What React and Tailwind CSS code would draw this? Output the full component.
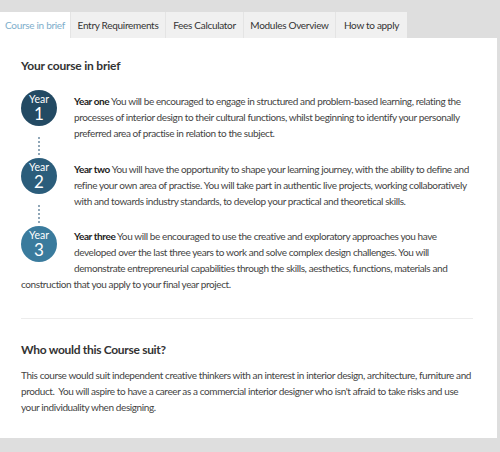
import React from "react";

const TABS = [
  { label: "Course in brief", w: "w-[70px]", active: true },
  { label: "Entry Requirements", w: "w-[95px]" },
  { label: "Fees Calculator", w: "w-[78px]" },
  { label: "Modules Overview", w: "w-[92px]" },
  { label: "How to apply", w: "w-[72px]" },
];

const YEARS = [
  {
    n: "1",
    title: "Year one",
    bg: "bg-[#234a63]",
    lines: [
      "You will be encouraged to engage in structured and problem-based learning, relating the",
      "processes of interior design to their cultural functions, whilst beginning to identify your personally",
      "preferred area of practise in relation to the subject.",
    ],
  },
  {
    n: "2",
    title: "Year two",
    bg: "bg-[#2b5d7b]",
    lines: [
      "You will have the opportunity to shape your learning journey, with the ability to define and",
      "refine your own area of practise. You will take part in authentic live projects, working collaboratively",
      "with and towards industry standards, to develop your practical and theoretical skills.",
    ],
  },
];

function Circle({ n, bg }) {
  return (
    <div className={`w-[36px] h-[36px] rounded-full ${bg} text-white flex flex-col items-center justify-center leading-none tracking-normal`}>
      <span className="text-[10.5px]">Year</span>
      <span className="text-[17px] mt-[1px]">{n}</span>
    </div>
  );
}

function Dots() {
  return (
    <div className="flex flex-col items-center gap-[2px] mt-[11px]">
      {[0, 1, 2, 3, 4].map((i) => (
        <span key={i} className="w-[2px] h-[2px] rounded-full bg-[#6b8aa0]" />
      ))}
    </div>
  );
}

export default function App() {
  return (
    <div
      className="w-[500px] h-[452px] bg-[#dedede] pt-[12px] overflow-hidden text-[#444]"
      style={{ fontFamily: "Lato, 'Open Sans', sans-serif" }}
    >
      {/* tabs */}
      <div className="flex h-[26px]">
        {TABS.map((t) => (
          <div
            key={t.label}
            className={`${t.w} flex items-center justify-center text-[10px] tracking-[-0.3px] whitespace-nowrap ${
              t.active ? "bg-white text-[#7eaecb]" : "bg-[#f0f0f0] text-[#333] border-l border-[#e4e4e4]"
            }`}
          >
            {t.label}
          </div>
        ))}
      </div>

      {/* panel */}
      <div className="w-[497px] h-[400px] bg-white px-[21px] text-[10px] leading-[16px] tracking-[-0.4px]">
        <h2 className="pt-[20px] text-[12px] leading-[16px] font-bold text-[#333] tracking-[-0.2px]">Your course in brief</h2>

        <div className="mt-[16px]">
          {YEARS.map((y) => (
            <div key={y.n} className="flex h-[68px]">
              <div className="w-[36px] flex flex-col items-center">
                <Circle n={y.n} bg={y.bg} />
                <Dots />
              </div>
              <p className="ml-[17px] pt-[3px] whitespace-nowrap">
                <b className="text-[#222]">{y.title}</b> {y.lines[0]}
                <br />
                {y.lines[1]}
                <br />
                {y.lines[2]}
              </p>
            </div>
          ))}

          <div className="whitespace-nowrap">
            <div className="float-left mr-[17px]">
              <Circle n="3" bg="bg-[#3a7b9d]" />
            </div>
            <p className="pt-[2px]">
              <b className="text-[#222]">Year three</b> You will be encouraged to use the creative and exploratory approaches you have
              <br />
              developed over the last three years to work and solve complex design challenges. You will
              <br />
              demonstrate entrepreneurial capabilities through the skills, aesthetics, functions, materials and
              <br />
              construction that you apply to your final year project.
            </p>
          </div>
        </div>

        <div className="mt-[26px] border-t border-[#ececec] mr-[3px]" />

        <h2 className="mt-[23px] text-[12px] leading-[16px] font-bold text-[#333] tracking-[-0.3px]">Who would this Course suit?</h2>
        <p className="mt-[9px] whitespace-nowrap">
          This course would suit independent creative thinkers with an interest in interior design, architecture, furniture and
          <br />
          product.&nbsp; You will aspire to have a career as a commercial interior designer who isn't afraid to take risks and use
          <br />
          your individuality when designing.
        </p>
      </div>
    </div>
  );
}
